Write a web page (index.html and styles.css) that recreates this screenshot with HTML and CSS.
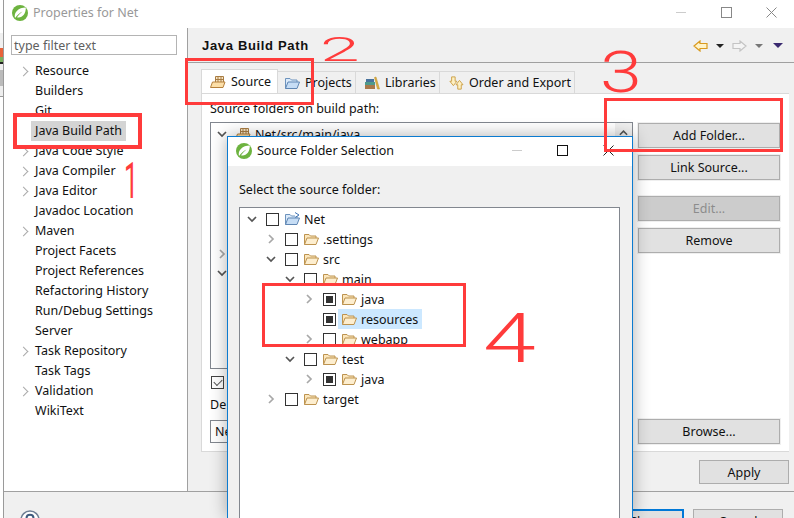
FILE: index.html
```html
<!DOCTYPE html>
<html lang="en">
<head>
    <meta charset="UTF-8">
    <title>Properties for Net</title>
    <link rel="stylesheet" href="styles.css">
</head>
<body>
    <svg class="defs" width="0" height="0">
        <symbol id="spring" viewBox="0 0 16 16">
            <circle cx="8" cy="8" r="8" fill="#6db33f"/>
            <path d="M3 13C1.500 7.500 6.500 2.500 13.800 2.500C14 9 10 13.500 5 12.300C7 9.500 8.500 8 10.500 6.500C8 7.500 5.500 10 3 13Z" fill="#fff"/>
        </symbol>
        <symbol id="folder" viewBox="0 0 16 14">
            <path d="M1.500 12.500V2.500H6L7.500 4H13V6" fill="#fbe6bc" stroke="#bd934f"/>
            <path d="M1.500 12.500L4 6H15.500L13 12.500Z" fill="#fdeecf" stroke="#bd934f"/>
        </symbol>
        <symbol id="srcfolder" viewBox="0 0 16 14">
            <path d="M5.500 1.500H13.500V8H5.500ZM8 1.500V8M11 1.500V8M5.500 4.500H13.500" fill="#f8e6c6" stroke="#a87c43"/>
            <path d="M.5 12.500L2.500 7H15L13 12.500Z" fill="#fcdfa8" stroke="#b5803c"/>
        </symbol>
        <symbol id="bluefolder" viewBox="0 0 16 14">
            <path d="M1.500 12.500V2.500H6L7.500 4H13V6" fill="#dbeafa" stroke="#6d93bd"/>
            <path d="M1.500 12.500L4 6H15.500L13 12.500Z" fill="#c6ddf5" stroke="#5f86b3"/>
        </symbol>
        <symbol id="chev-r" viewBox="0 0 8 10">
            <path d="M2 1L6 5L2 9" fill="none" stroke="#a8a8a8" stroke-width="1.700"/>
        </symbol>
        <symbol id="chev-d" viewBox="0 0 10 8">
            <path d="M1 2L5 6L9 2" fill="none" stroke="#555" stroke-width="1.700"/>
        </symbol>
    </svg>

    <div class="desktop-edge"></div>

    <div class="window">
        <div class="titlebar">
            <svg class="title-icon"><use href="#spring"/></svg>
            <span class="title-text">Properties for Net</span>
            <span class="win-min"></span>
            <span class="win-max"></span>
            <svg class="win-close" viewBox="0 0 11 11"><path d="M.5 .5L10.500 10.500M10.500 .5L.5 10.500" stroke="#888" fill="none"/></svg>
        </div>

        <div class="main">
            <div class="sidebar">
                <div class="filter">type filter text</div>
                <ul class="pages">
                    <li class="has-kids">Resource</li>
                    <li>Builders</li>
                    <li>Git</li>
                    <li class="current"><span>Java Build Path</span></li>
                    <li class="has-kids">Java Code Style</li>
                    <li class="has-kids">Java Compiler</li>
                    <li class="has-kids">Java Editor</li>
                    <li>Javadoc Location</li>
                    <li class="has-kids">Maven</li>
                    <li>Project Facets</li>
                    <li>Project References</li>
                    <li>Refactoring History</li>
                    <li>Run/Debug Settings</li>
                    <li>Server</li>
                    <li class="has-kids">Task Repository</li>
                    <li>Task Tags</li>
                    <li class="has-kids">Validation</li>
                    <li>WikiText</li>
                </ul>
            </div>

            <div class="content">
                <div class="content-head">
                    <h1>Java Build Path</h1>
                    <div class="nav-arrows">
                        <svg class="nav-arrow" viewBox="0 0 15 12"><path d="M1 6L7 1V3.500H14V8.500H7V11Z" fill="#fff3c8" stroke="#d99a1f" stroke-width="1.200"/></svg>
                        <span class="drop dark"></span>
                        <svg class="nav-arrow" viewBox="0 0 15 12"><path d="M14 6L8 1V3.500H1V8.500H8V11Z" fill="#f4f4f4" stroke="#c4c4c4" stroke-width="1.200"/></svg>
                        <span class="drop grey"></span>
                        <span class="drop purple"></span>
                    </div>
                </div>

                <div class="tabs">
                    <div class="tab active">
                        <svg class="tab-icon"><use href="#srcfolder"/></svg>Source
                    </div>
                    <div class="tab">
                        <svg class="tab-icon"><use href="#bluefolder"/></svg>Projects
                    </div>
                    <div class="tab">
                        <svg class="tab-icon" viewBox="0 0 16 14">
                            <path d="M1 9H11V13H1Z" fill="#a9784a"/>
                            <path d="M1 6H11V9H1Z" fill="#4f9a8c"/>
                            <path d="M2 3H10V6H2Z" fill="#48729c"/>
                            <path d="M10.500 1.500L12 1L15.500 13H13.500Z" fill="#e0b040" stroke="#b58a2a" stroke-width=".5"/>
                        </svg>Libraries
                    </div>
                    <div class="tab">
                        <svg class="tab-icon" viewBox="0 0 16 16">
                            <path d="M3 1H7V6H9L5 11L1 6H3Z" fill="#fdf0c4" stroke="#c99a3a"/>
                            <path d="M10 15V10H8L12 5L16 10H14V15Z" fill="#fdf0c4" stroke="#c99a3a"/>
                        </svg>Order and Export
                    </div>
                </div>

                <div class="tab-panel">
                    <div class="panel-left">
                        <div class="panel-label">Source folders on build path:</div>
                        <div class="src-list">
                            <div class="src-row">
                                <svg class="chev-down"><use href="#chev-d"/></svg>
                                <svg class="src-icon"><use href="#srcfolder"/></svg>
                                Net/src/main/java
                            </div>
                            <div class="src-scroll">
                                <svg class="scroll-up" viewBox="0 0 10 6"><path d="M1 5L5 1L9 5" fill="none" stroke="#555" stroke-width="1.700"/></svg>
                            </div>
                            <svg class="hidden-chev one"><use href="#chev-r"/></svg>
                            <svg class="hidden-chev two"><use href="#chev-d"/></svg>
                        </div>
                        <div class="allow-row"><span class="check ticked"></span></div>
                        <div class="default-label">De</div>
                        <div class="default-input">Ne</div>
                    </div>
                    <div class="panel-buttons">
                        <div class="btn">Add Folder...</div>
                        <div class="btn">Link Source...</div>
                        <div class="btn disabled">Edit...</div>
                        <div class="btn">Remove</div>
                        <div class="btn browse">Browse...</div>
                    </div>
                </div>

                <div class="apply-row">
                    <div class="btn apply">Apply</div>
                </div>
            </div>
        </div>

        <div class="footer">
            <svg class="help" viewBox="0 0 20 20">
                <circle cx="10" cy="10" r="9" fill="#fff" stroke="#6f7f95" stroke-width="1.500"/>
                <path d="M6.500 8C6.500 3.500 13.500 3.500 13.500 8C13.500 10.500 10 10.500 10 13" fill="none" stroke="#3f5a7d" stroke-width="2"/>
            </svg>
            <div class="footer-buttons">
                <div class="btn default-btn">Apply and Close</div>
                <div class="btn cancel">Cancel</div>
            </div>
        </div>
    </div>

    <!-- the small dialog sits over the properties window -->
    <div class="dialog">
        <div class="dialog-title">
            <svg class="title-icon"><use href="#spring"/></svg>
            <span class="dialog-name">Source Folder Selection</span>
            <span class="win-min"></span>
            <span class="win-max dark"></span>
            <svg class="win-close" viewBox="0 0 11 11"><path d="M.5 .5L10.500 10.500M10.500 .5L.5 10.500" stroke="#222" fill="none"/></svg>
        </div>
        <div class="dialog-body">
            <div class="dialog-label">Select the source folder:</div>
            <div class="folder-tree">
                <div class="node lv0">
                    <svg class="tw down"><use href="#chev-d"/></svg><span class="check"></span>
                    <svg class="fld prj" viewBox="0 0 16 14">
                        <use href="#bluefolder"/>
                        <path d="M11 .5L15 3L11 5.500" fill="#fff" stroke="#3f74b5"/>
                    </svg><span class="name">Net</span>
                </div>
                <div class="node lv1">
                    <svg class="tw"><use href="#chev-r"/></svg><span class="check"></span>
                    <svg class="fld"><use href="#folder"/></svg><span class="name">.settings</span>
                </div>
                <div class="node lv1">
                    <svg class="tw down"><use href="#chev-d"/></svg><span class="check"></span>
                    <svg class="fld"><use href="#folder"/></svg><span class="name">src</span>
                </div>
                <div class="node lv2">
                    <svg class="tw down"><use href="#chev-d"/></svg><span class="check"></span>
                    <svg class="fld"><use href="#folder"/></svg><span class="name">main</span>
                </div>
                <div class="node lv3">
                    <svg class="tw"><use href="#chev-r"/></svg><span class="check on"></span>
                    <svg class="fld"><use href="#folder"/></svg><span class="name">java</span>
                </div>
                <div class="node lv3">
                    <span class="tw"></span><span class="check on"></span>
                    <span class="picked"><svg class="fld"><use href="#folder"/></svg><span class="name">resources</span></span>
                </div>
                <div class="node lv3">
                    <svg class="tw"><use href="#chev-r"/></svg><span class="check"></span>
                    <svg class="fld"><use href="#folder"/></svg><span class="name">webapp</span>
                </div>
                <div class="node lv2">
                    <svg class="tw down"><use href="#chev-d"/></svg><span class="check"></span>
                    <svg class="fld"><use href="#folder"/></svg><span class="name">test</span>
                </div>
                <div class="node lv3">
                    <svg class="tw"><use href="#chev-r"/></svg><span class="check on"></span>
                    <svg class="fld"><use href="#folder"/></svg><span class="name">java</span>
                </div>
                <div class="node lv1">
                    <svg class="tw"><use href="#chev-r"/></svg><span class="check"></span>
                    <svg class="fld"><use href="#folder"/></svg><span class="name">target</span>
                </div>
            </div>
        </div>
    </div>

    <!-- red marks someone drew on top of the screenshot -->
    <div class="mark box-1"></div>
    <div class="mark box-2"></div>
    <div class="mark box-3"></div>
    <div class="mark box-4"></div>
    <span class="num num-1">1</span>
    <span class="num num-2">2</span>
    <span class="num num-3">3</span>
    <span class="num num-4">4</span>
</body>
</html>
```

FILE: styles.css
```css
* {
    box-sizing: border-box;
}
html, body {
    margin: 0;
    padding: 0;
    width: 794px;
    height: 518px;
    overflow: hidden;
}
body {
    position: relative;
    font-family: "Noto Sans", sans-serif;
    font-size: 12.5px;
    color: #111;
    background-color: #fff;
}
.defs {
    position: absolute;
}

/* bit of whatever was behind the window */
.desktop-edge {
    position: absolute;
    left: 0;
    top: 0;
    width: 4px;
    height: 518px;
    background: linear-gradient(#fff 0 33px, #f0f0f0 33px 48px, #e8623a 48px 57px, #7ab060 57px 62px, #222 62px 64px, #eee 64px 70px, #bbb 70px 86px, #eee 86px 96px, #999 96px 97px, #fff 97px);
}
.window {
    position: absolute;
    left: 3px;
    top: 0;
    width: 791px;
    height: 518px;
    display: flex;
    flex-direction: column;
    border-left: 1px solid #9a9a9a;
    background-color: #f0f0f0;
}

/* Title bar */
.titlebar {
    height: 28px;
    flex: none;
    display: flex;
    align-items: center;
    padding: 0 0 3px 8px;
    background-color: #fff;
    color: #999;
}
.title-icon {
    width: 16px;
    height: 16px;
    flex: none;
}
.title-text {
    margin-left: 5px;
}
.win-min {
    width: 10px;
    height: 1px;
    margin-left: auto;
    background-color: #ccc;
}
.win-max {
    width: 11px;
    height: 11px;
    margin-left: 35px;
    border: 1px solid #888;
}
.win-max.dark {
    border-color: #111;
}
.win-close {
    width: 11px;
    height: 11px;
    margin-left: 34px;
    margin-right: 17px;
}

.main {
    height: 463px;
    flex: none;
    display: flex;
}

/* Left page list */
.sidebar {
    width: 184px;
    flex: none;
    padding: 7px 0 0 7px;
    background-color: #fff;
    border-right: 1px solid #a0a0a0;
}
.filter {
    width: 166px;
    height: 20px;
    padding-left: 2px;
    line-height: 19px;
    color: #5f5f5f;
    border: 1px solid #b4b4b4;
}
.pages {
    list-style: none;
    margin: 6px 0 0;
    padding: 0;
}
.pages li {
    position: relative;
    height: 20px;
    line-height: 20px;
    padding-left: 24px;
}
.pages li.has-kids::before {
    content: "";
    position: absolute;
    left: 9px;
    top: 7px;
    width: 6px;
    height: 6px;
    border-top: 1.7px solid #aaa;
    border-right: 1.7px solid #aaa;
    transform: rotate(45deg);
}
.pages li.current span {
    display: inline-block;
    height: 20px;
    margin-left: -4px;
    padding: 0 4px;
    background-color: #d4d4d4;
}

/* Right side */
.content {
    flex: 1;
    display: flex;
    flex-direction: column;
}
.content-head {
    height: 35px;
    flex: none;
    display: flex;
    align-items: center;
    padding: 1px 11px 0 14px;
    border-bottom: 1px solid #a0a0a0;
}
.content-head h1 {
    margin: 0;
    font-family: "Liberation Sans", sans-serif;
    font-size: 13px;
    letter-spacing: .67px;
    font-weight: bold;
    color: #111;
}
.nav-arrows {
    margin-left: auto;
    display: flex;
    align-items: center;
    gap: 8px;
}
.nav-arrow {
    width: 15px;
    height: 12px;
}
.drop {
    width: 0;
    height: 0;
    border-left: 4px solid transparent;
    border-right: 4px solid transparent;
    border-top: 4px solid #222;
}
.drop.grey {
    border-top-color: #777;
}
.drop.purple {
    margin-left: 2px;
    border-left-width: 5px;
    border-right-width: 5px;
    border-top: 5px solid #3a2a70;
}

.tabs {
    flex: none;
    display: flex;
    align-items: flex-end;
    height: 30px;
    padding-left: 13px;
}
.tab {
    height: 22px;
    display: flex;
    align-items: center;
    gap: 5px;
    padding: 0 0 0 8px;
    white-space: nowrap;
    background-color: #f0f0f0;
    border: 1px solid #d9d9d9;
    border-bottom: none;
    border-left: none;
}
.tab-icon {
    width: 16px;
    height: 14px;
    flex: none;
}
.tab:nth-child(1) { width: 77px; }
.tab:nth-child(2) { width: 78px; padding-left: 6px; }
.tab:nth-child(3) { width: 84px; }
.tab:nth-child(4) { width: 135px; }
.tab.active {
    height: 24px;
    background-color: #fff;
    border-left: 1px solid #d9d9d9;
}

.tab-panel {
    height: 359px;
    flex: none;
    display: flex;
    margin: 0 5px 0 13px;
    padding-left: 8px;
    background-color: #fff;
    border: 1px solid #d9d9d9;
    border-right: none;
}
.panel-left {
    width: 428px;
    flex: none;
}
.panel-label {
    height: 28px;
    padding-top: 6px;
    line-height: 18px;
}
.src-list {
    position: relative;
    width: 423px;
    height: 247px;
    padding-top: 1px;
    border: 1px solid #82878f;
}
.src-row {
    height: 20px;
    display: flex;
    align-items: center;
    padding-left: 6px;
}
.chev-down {
    width: 10px;
    height: 8px;
    margin-right: 8px;
}
.src-icon {
    width: 16px;
    height: 14px;
    margin-right: 4px;
}
.src-scroll {
    position: absolute;
    right: 0;
    top: 0;
    bottom: 0;
    width: 17px;
    padding: 7px 0 0 4px;
    background-color: #f0f0f0;
}
.scroll-up {
    display: block;
    width: 9px;
    height: 6px;
}
.hidden-chev {
    position: absolute;
    left: 7px;
}
.hidden-chev.one {
    top: 126px;
    width: 8px;
    height: 10px;
}
.hidden-chev.two {
    top: 146px;
    left: 6px;
    width: 10px;
    height: 8px;
}
.allow-row {
    height: 26px;
    padding-top: 7px;
    padding-left: 1px;
}
.default-label {
    height: 25px;
    line-height: 20px;
}
.default-input {
    width: 30px;
    height: 23px;
    padding-left: 4px;
    line-height: 21px;
    border: 1px solid #82878f;
}

.panel-buttons {
    width: 142px;
    flex: none;
    display: flex;
    flex-direction: column;
    padding-top: 29px;
}
.btn {
    height: 25px;
    flex: none;
    display: flex;
    align-items: center;
    justify-content: center;
    white-space: nowrap;
    background-color: #e1e1e1;
    border: 1px solid #adadad;
    box-shadow: 0 0 0 1px #efefef;
}
.panel-buttons .btn + .btn {
    margin-top: 7px;
}
.panel-buttons .btn.disabled {
    margin-top: 16px;
    background-color: #ccc;
    color: #8c8c8c;
}
.panel-buttons .btn.browse {
    margin-top: auto;
    margin-bottom: 7px;
}

.apply-row {
    flex: 1;
    display: flex;
    justify-content: flex-end;
    align-items: flex-start;
    padding: 8px 5px 0 0;
}
.btn.apply {
    width: 90px;
    height: 24px;
    box-shadow: none;
}

.footer {
    flex: 1;
    display: flex;
    overflow: hidden;
    border-top: 1px solid #a0a0a0;
}
.help {
    width: 20px;
    height: 20px;
    margin: 18px 0 0 16px;
}
.footer-buttons {
    margin-left: auto;
    display: flex;
    align-items: flex-start;
    gap: 9px;
    padding: 17px 11px 0 0;
}
.footer-buttons .btn {
    width: 90px;
    height: 24px;
    box-shadow: none;
}
.footer-buttons .btn.default-btn {
    width: 140px;
    border: 2px solid #0078d7;
}

/* Dialog */
.dialog {
    position: absolute;
    left: 227px;
    top: 136px;
    width: 406px;
    height: 382px;
    display: flex;
    flex-direction: column;
    background-color: #f0f0f0;
    border: 1px solid #0c7bd0;
    border-bottom: none;
    box-shadow: 0 0 16px rgba(0, 0, 0, .32);
}
.dialog-title {
    height: 29px;
    flex: none;
    display: flex;
    align-items: center;
    padding: 0 0 2px 8px;
    background-color: #fff;
}
.dialog-name {
    margin-left: 5px;
}
.dialog-title .win-close {
    margin-left: 35px;
    margin-right: 18px;
}
.dialog-body {
    flex: 1;
    min-height: 0;
    display: flex;
    flex-direction: column;
    padding: 0 12px 0 11px;
}
.dialog-label {
    height: 41px;
    flex: none;
    padding-top: 15px;
    line-height: 18px;
}
.folder-tree {
    flex: 1;
    padding-top: 1px;
    background-color: #fff;
    border: 1px solid #82878f;
    border-bottom: none;
}
.node {
    height: 20px;
    display: flex;
    align-items: center;
    white-space: nowrap;
}
.lv0 { padding-left: 7px; }
.lv1 { padding-left: 26px; }
.lv2 { padding-left: 45px; }
.lv3 { padding-left: 64px; }
.tw {
    width: 10px;
    height: 10px;
    flex: none;
    margin-right: 9px;
}
.check {
    width: 13px;
    height: 13px;
    flex: none;
    display: flex;
    align-items: center;
    justify-content: center;
    background-color: #fff;
    border: 1px solid #333;
}
.check.on::after {
    content: "";
    width: 7px;
    height: 7px;
    background-color: #333;
}
.check.ticked {
    border-color: #444;
}
.check.ticked::after {
    content: "";
    width: 7px;
    height: 4px;
    margin-top: -3px;
    border-left: 1.5px solid #555;
    border-bottom: 1.5px solid #555;
    transform: rotate(-45deg);
}
.fld {
    width: 16px;
    height: 14px;
    flex: none;
    margin-left: 5px;
}
.name {
    margin-left: 4px;
}
.picked {
    width: 84px;
    height: 20px;
    display: flex;
    align-items: center;
    margin-left: 2px;
    background-color: #cce8ff;
}
.picked .fld {
    margin-left: 3px;
}

/* Red annotations */
.mark {
    position: absolute;
    border: 3px solid #ff3b3b;
}
.box-1 { left: 13px; top: 113px; width: 129px; height: 36px; border-width: 4px; }
.box-2 { left: 185px; top: 58px; width: 129px; height: 47px; }
.box-3 { left: 604px; top: 98px; width: 179px; height: 54px; }
.box-4 { left: 262px; top: 283px; width: 204px; height: 64px; }
.num {
    position: absolute;
    font-family: "Roboto", sans-serif;
    font-weight: 300;
    line-height: 1;
    color: #ff3b3b;
    transform-origin: 0 0;
}
.num-1 { left: 124px; top: 156px; font-size: 50px; font-weight: 400; transform: scaleX(.5); }
.num-2 { left: 320px; top: 32px; font-size: 34px; transform: scaleX(2.1); }
.num-3 { left: 600px; top: 43px; font-size: 58px; transform: scaleX(1.3); }
.num-4 { left: 483px; top: 305px; font-size: 68px; transform: scaleX(1.4); }
```
